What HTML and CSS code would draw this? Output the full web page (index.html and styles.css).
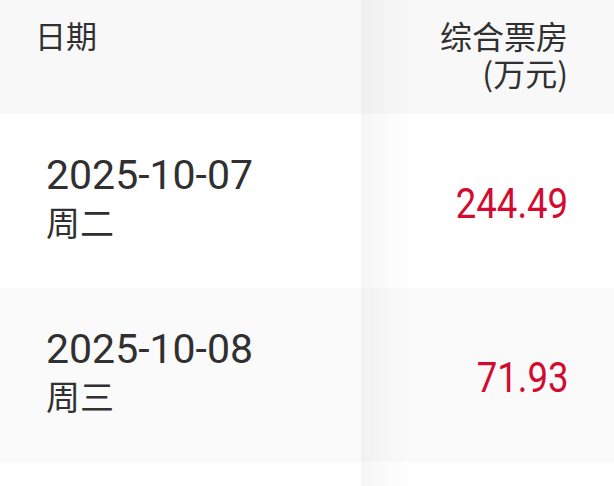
FILE: index.html
```html
<!DOCTYPE html>
<html lang="zh-CN">
<head>
<meta charset="utf-8">
<title>综合票房</title>
<link rel="stylesheet" href="styles.css">
</head>
<body>
<div class="table">
  <div class="row head">
    <div class="cell cell-date"><span class="head-text">日期</span></div>
    <div class="cell cell-box"><span class="head-text">综合票房<br>(万元)</span></div>
  </div>
  <div class="row body-row">
    <div class="cell cell-date">
      <div class="date">2025-10-07</div>
      <div class="week">周二</div>
    </div>
    <div class="cell cell-box"><span class="num">244.49</span></div>
  </div>
  <div class="row body-row alt">
    <div class="cell cell-date">
      <div class="date">2025-10-08</div>
      <div class="week">周三</div>
    </div>
    <div class="cell cell-box"><span class="num">71.93</span></div>
  </div>
  <div class="row tail"></div>
  <div class="shadow"></div>
</div>
</body>
</html>
```

FILE: styles.css
```css
html, body {
  margin: 0;
  padding: 0;
  background: #ffffff;
}

body {
  font-family: "Noto Sans CJK SC", "Noto Sans", sans-serif;
  color: #303030;
}

.table {
  position: relative;
  width: 614px;
  min-height: 486px;
  overflow: hidden;
}

.row {
  display: flex;
}

.cell {
  box-sizing: border-box;
}

.cell-date {
  width: 361px;
  flex: none;
}

.cell-box {
  flex: 1;
  text-align: right;
  padding-right: 46px;
}

.head {
  height: 114px;
  background: #f8f8f8;
}

.head .cell-date {
  padding-left: 35px;
  padding-top: 17px;
}

.head .cell-box {
  padding-top: 17px;
}

.head-text {
  font-size: 32px;
  line-height: 36px;
}

.head .cell-date .head-text {
  font-size: 31px;
}

.body-row {
  height: 174px;
  align-items: center;
  background: #ffffff;
}

.body-row.alt {
  background: #fafafa;
}

.body-row .cell-date {
  padding-left: 46px;
  padding-bottom: 5px;
}

.body-row .cell-box {
  padding-top: 5px;
}

.date {
  font-family: "Roboto", sans-serif;
  font-size: 41px;
  line-height: 46px;
}

.week {
  margin-top: 1px;
  font-size: 34px;
  line-height: 46px;
}

.num {
  display: inline-block;
  font-family: "Roboto", sans-serif;
  font-size: 42px;
  line-height: 48px;
  color: #d20b30;
  transform: scaleX(0.87);
  transform-origin: right center;
}

.tail {
  height: 30px;
}

.shadow {
  position: absolute;
  top: 0;
  bottom: 0;
  left: 361px;
  width: 50px;
  background: linear-gradient(to right, rgba(0, 0, 0, 0.035), rgba(0, 0, 0, 0));
  pointer-events: none;
}
```
